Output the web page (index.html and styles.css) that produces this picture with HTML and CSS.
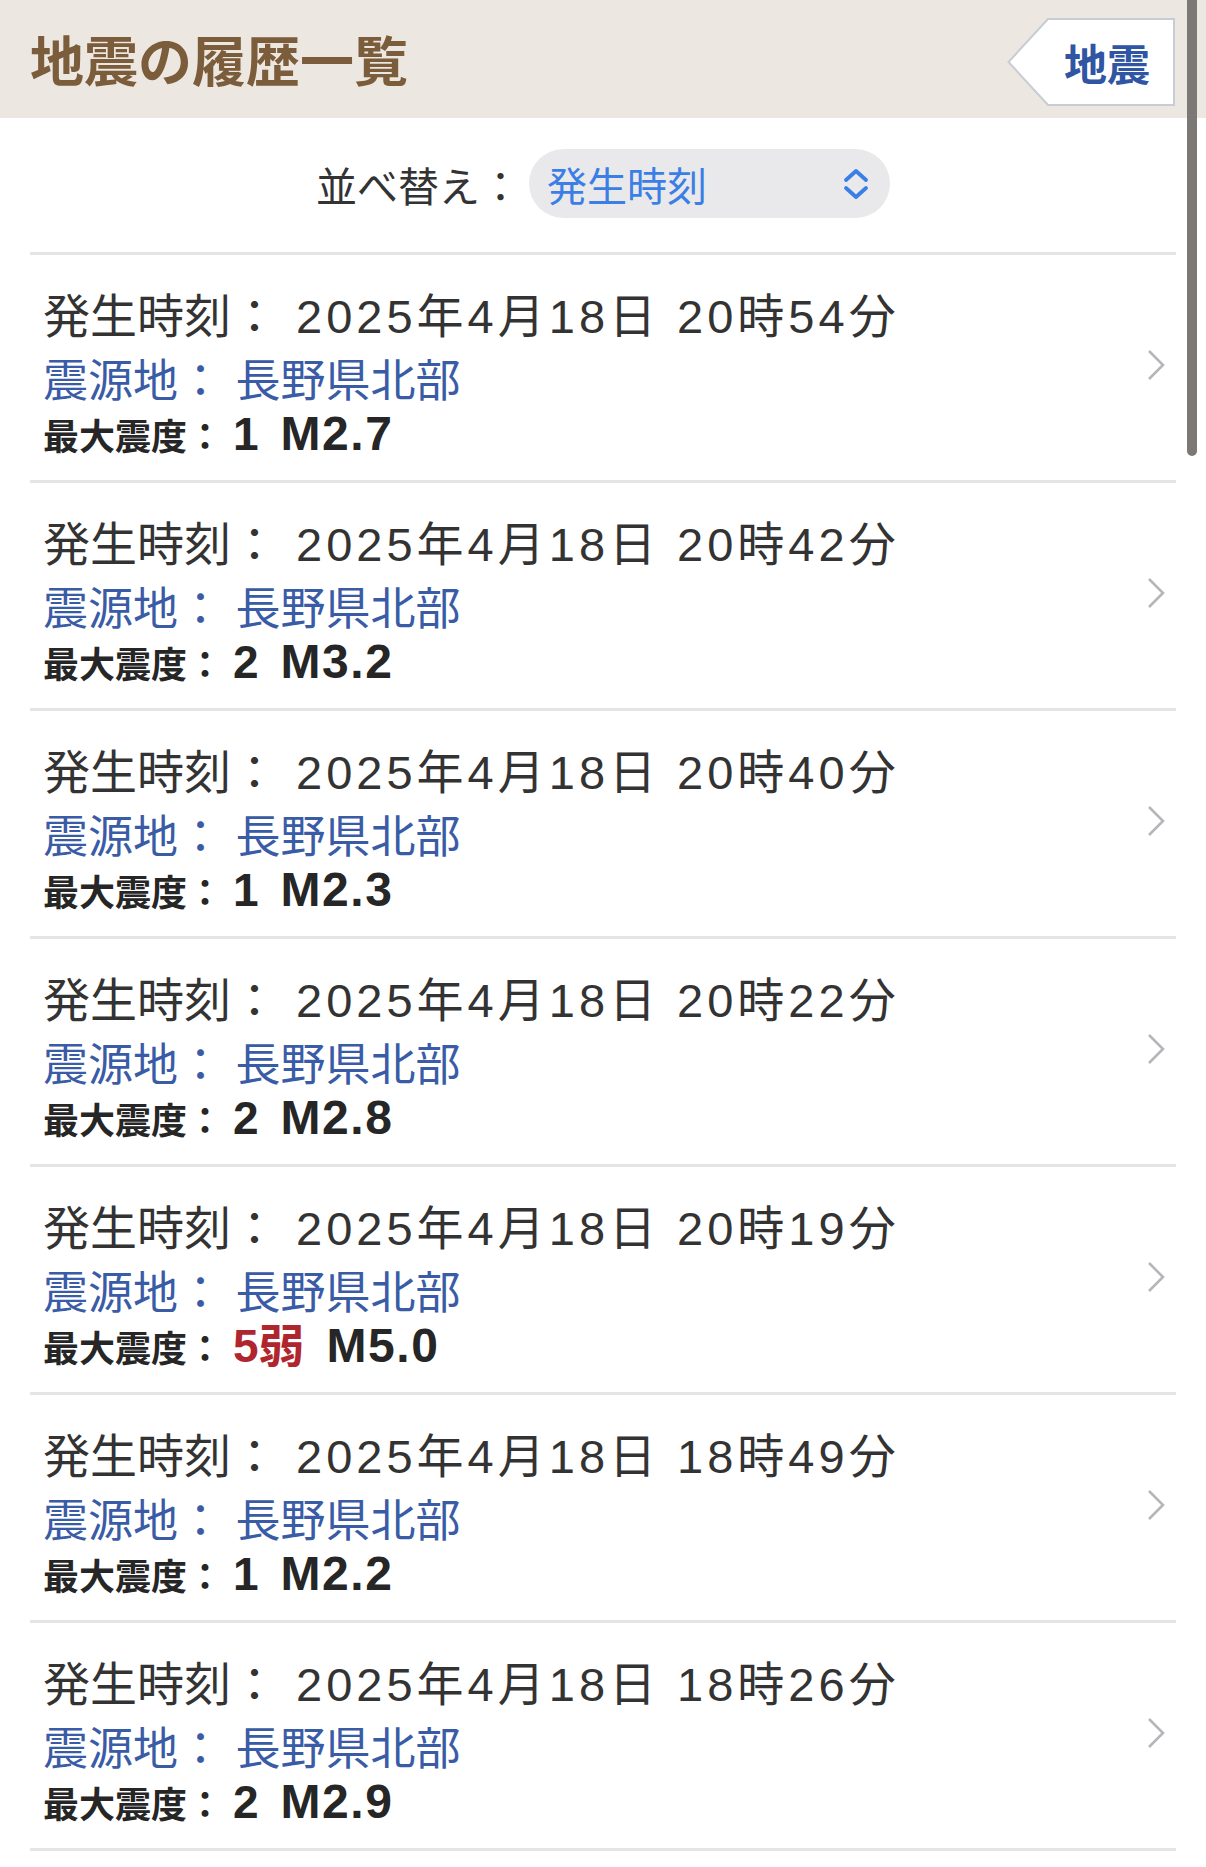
FILE: index.html
```html
<!doctype html>
<html lang="ja">
<head>
  <meta charset="UTF-8">
  <meta name="viewport" content="width=device-width, initial-scale=1.0">
  <title>地震の履歴一覧</title>
  <link rel="stylesheet" href="styles.css">
</head>

<body>
  <header id="header">
    <h1>地震の履歴一覧</h1>

    <a class="back-tab" href="#">
      <svg class="back-tab-shape" viewBox="0 0 168 88" preserveAspectRatio="none">
        <polygon points="41,1 167,1 167,87 41,87 1.5,44" fill="#fff" stroke="#c8ccd5" stroke-width="2"/>
      </svg>
      <span>地震</span>
    </a>
  </header>

  <main id="main">
    <div class="sort">
      <span class="sort-label">並べ替え：</span>
      <div class="sort-select">
        <span>発生時刻</span>
        <svg width="28" height="34" viewBox="0 0 28 34">
          <path d="M4 13 L14 4 L24 13 M4 21 L14 30 L24 21" fill="none" stroke="#3a7ee6" stroke-width="3.8" stroke-linecap="round" stroke-linejoin="round"/>
        </svg>
      </div>
    </div>

    <ul class="quake-list">
      <li class="quake">
        <div class="quake-info">
          <p class="quake-time">発生時刻： <span class="date">2025年4月18日 20時54分</span></p>
          <p class="quake-place">震源地： 長野県北部</p>
          <p class="quake-scale"><span class="label">最大震度：</span><span class="shindo">1</span><span class="mag">M2.7</span></p>
        </div>
        <svg class="chevron" width="20" height="32" viewBox="0 0 20 32"><path d="M3 2 L17 16 L3 30" fill="none" stroke="#b5b5ba" stroke-width="2.6"/></svg>
      </li>

      <li class="quake">
        <div class="quake-info">
          <p class="quake-time">発生時刻： <span class="date">2025年4月18日 20時42分</span></p>
          <p class="quake-place">震源地： 長野県北部</p>
          <p class="quake-scale"><span class="label">最大震度：</span><span class="shindo">2</span><span class="mag">M3.2</span></p>
        </div>
        <svg class="chevron" width="20" height="32" viewBox="0 0 20 32"><path d="M3 2 L17 16 L3 30" fill="none" stroke="#b5b5ba" stroke-width="2.6"/></svg>
      </li>

      <li class="quake">
        <div class="quake-info">
          <p class="quake-time">発生時刻： <span class="date">2025年4月18日 20時40分</span></p>
          <p class="quake-place">震源地： 長野県北部</p>
          <p class="quake-scale"><span class="label">最大震度：</span><span class="shindo">1</span><span class="mag">M2.3</span></p>
        </div>
        <svg class="chevron" width="20" height="32" viewBox="0 0 20 32"><path d="M3 2 L17 16 L3 30" fill="none" stroke="#b5b5ba" stroke-width="2.6"/></svg>
      </li>

      <li class="quake">
        <div class="quake-info">
          <p class="quake-time">発生時刻： <span class="date">2025年4月18日 20時22分</span></p>
          <p class="quake-place">震源地： 長野県北部</p>
          <p class="quake-scale"><span class="label">最大震度：</span><span class="shindo">2</span><span class="mag">M2.8</span></p>
        </div>
        <svg class="chevron" width="20" height="32" viewBox="0 0 20 32"><path d="M3 2 L17 16 L3 30" fill="none" stroke="#b5b5ba" stroke-width="2.6"/></svg>
      </li>

      <li class="quake">
        <div class="quake-info">
          <p class="quake-time">発生時刻： <span class="date">2025年4月18日 20時19分</span></p>
          <p class="quake-place">震源地： 長野県北部</p>
          <p class="quake-scale"><span class="label">最大震度：</span><span class="shindo strong">5弱</span><span class="mag">M5.0</span></p>
        </div>
        <svg class="chevron" width="20" height="32" viewBox="0 0 20 32"><path d="M3 2 L17 16 L3 30" fill="none" stroke="#b5b5ba" stroke-width="2.6"/></svg>
      </li>

      <li class="quake">
        <div class="quake-info">
          <p class="quake-time">発生時刻： <span class="date">2025年4月18日 18時49分</span></p>
          <p class="quake-place">震源地： 長野県北部</p>
          <p class="quake-scale"><span class="label">最大震度：</span><span class="shindo">1</span><span class="mag">M2.2</span></p>
        </div>
        <svg class="chevron" width="20" height="32" viewBox="0 0 20 32"><path d="M3 2 L17 16 L3 30" fill="none" stroke="#b5b5ba" stroke-width="2.6"/></svg>
      </li>

      <li class="quake">
        <div class="quake-info">
          <p class="quake-time">発生時刻： <span class="date">2025年4月18日 18時26分</span></p>
          <p class="quake-place">震源地： 長野県北部</p>
          <p class="quake-scale"><span class="label">最大震度：</span><span class="shindo">2</span><span class="mag">M2.9</span></p>
        </div>
        <svg class="chevron" width="20" height="32" viewBox="0 0 20 32"><path d="M3 2 L17 16 L3 30" fill="none" stroke="#b5b5ba" stroke-width="2.6"/></svg>
      </li>
    </ul>
  </main>

  <div class="scroll-indicator"></div>
</body>
</html>
```

FILE: styles.css
```css
*{
  box-sizing: border-box;
}

html, body{
  overflow: hidden;
}

body{
  margin: 0;
  padding: 0;
  color: #333;
  font-family: "Liberation Sans", "Noto Sans CJK JP", sans-serif;
  background: #fff;
}

p{
  margin: 0;
}

#header{
  display: flex;
  align-items: center;
  justify-content: space-between;
  height: 118px;
  padding: 0 31px 0 30px;
  background: #ece7e1;
}

#header h1{
  margin: 0;
  color: #7b5c3b;
  font-family: "Noto Sans CJK JP", sans-serif;
  font-size: 54px;
  font-weight: 700;
  line-height: 1;
}

.back-tab{
  position: relative;
  display: flex;
  align-items: center;
  justify-content: flex-end;
  width: 168px;
  height: 88px;
  margin-top: 6px;
  padding-right: 25px;
  color: #2f55a3;
  font-family: "Noto Sans CJK JP", sans-serif;
  font-size: 43px;
  font-weight: 700;
  text-decoration: none;
}

.back-tab-shape{
  position: absolute;
  top: 0;
  left: 0;
  width: 100%;
  height: 100%;
}

.back-tab span{
  position: relative;
}

/* sort */

.sort{
  display: flex;
  align-items: center;
  justify-content: center;
  padding: 31px 0 34px;
}

.sort-label{
  margin-right: 8px;
  color: #333;
  font-size: 41px;
}

.sort-select{
  display: flex;
  align-items: center;
  justify-content: space-between;
  width: 361px;
  height: 69px;
  padding: 0 20px 0 18px;
  color: #3a7ee6;
  font-size: 40px;
  background: #e9e9eb;
  border-radius: 35px;
}

/* list */

.quake-list{
  margin: 0 30px;
  padding: 0;
  list-style: none;
  border-top: 3px solid #e5e5e5;
}

.quake{
  display: flex;
  align-items: center;
  justify-content: space-between;
  height: 228px;
  padding: 34px 10px 21px 13px;
  border-bottom: 3px solid #e5e5e5;
}

.quake-time{
  font-size: 47px;
  line-height: 66px;
  color: #333;
}

.quake-time .date{
  padding-left: 5px;
  letter-spacing: 4px;
}

.quake-place{
  font-size: 45px;
  line-height: 64px;
  color: #3a5ca6;
}

.quake-scale{
  line-height: 40px;
  color: #262626;
  font-weight: 700;
}

.quake-scale .label{
  font-size: 36px;
}

.quake-scale .shindo{
  margin-left: 10px;
  font-size: 46px;
}

.quake-scale .shindo.strong{
  color: #b0262f;
}

.quake-scale .mag{
  margin-left: 22px;
  font-size: 48px;
  letter-spacing: 1.5px;
}

.chevron{
  margin-top: -18px;
}

.scroll-indicator{
  position: fixed;
  top: -10px;
  right: 9px;
  width: 10px;
  height: 466px;
  background: #7b7876;
  border-radius: 5px;
}
```
